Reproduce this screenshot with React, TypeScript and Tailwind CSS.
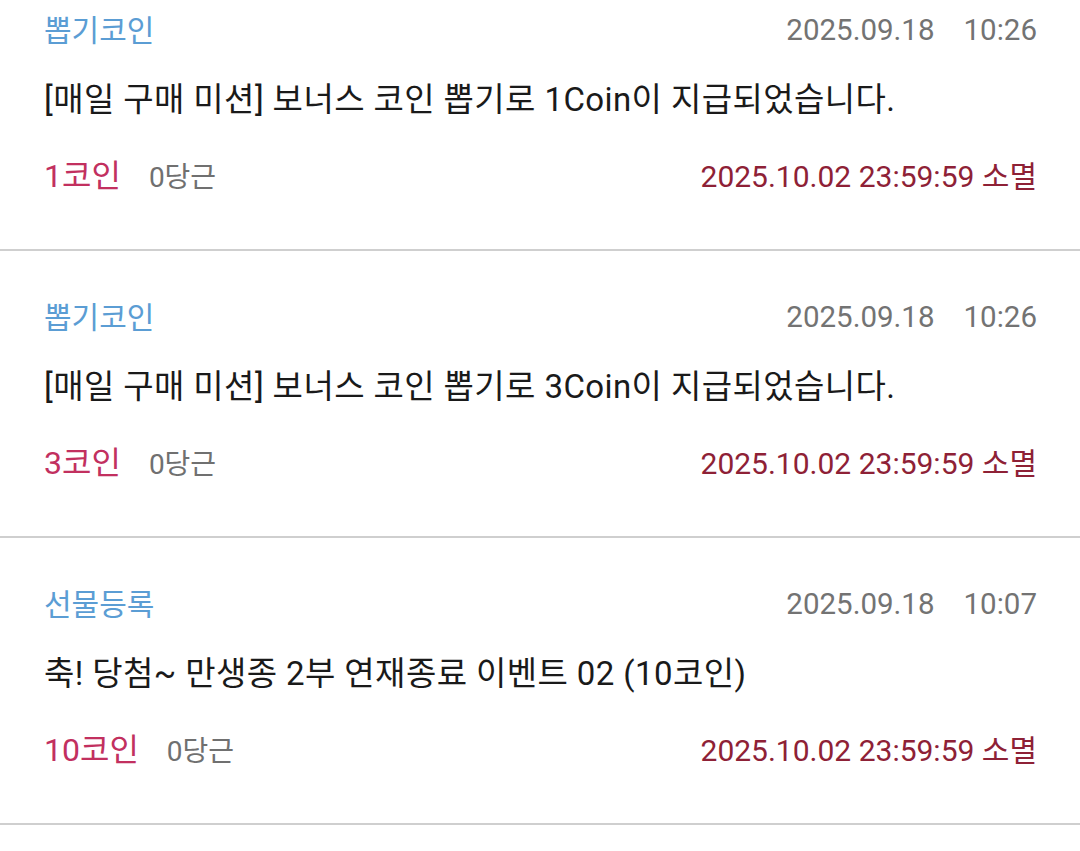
import React from 'react';

type Entry = {
  kind: string;
  date: string;
  time: string;
  message: string;
  coins: string;
  carrots: string;
  expires: string;
};

const entries: Entry[] = [
  {
    kind: '뽑기코인',
    date: '2025.09.18',
    time: '10:26',
    message: '[매일 구매 미션] 보너스 코인 뽑기로 1Coin이 지급되었습니다.',
    coins: '1코인',
    carrots: '0당근',
    expires: '2025.10.02 23:59:59 소멸',
  },
  {
    kind: '뽑기코인',
    date: '2025.09.18',
    time: '10:26',
    message: '[매일 구매 미션] 보너스 코인 뽑기로 3Coin이 지급되었습니다.',
    coins: '3코인',
    carrots: '0당근',
    expires: '2025.10.02 23:59:59 소멸',
  },
  {
    kind: '선물등록',
    date: '2025.09.18',
    time: '10:07',
    message: '축! 당첨~ 만생종 2부 연재종료 이벤트 02 (10코인)',
    coins: '10코인',
    carrots: '0당근',
    expires: '2025.10.02 23:59:59 소멸',
  },
];

const HistoryRow = ({ entry }: { entry: Entry }) => (
  <div className="border-b-2 border-[#cfcfcf] pl-[44px] pr-[43px] pt-[40px] pb-[47px]">
    <div className="flex h-[52px] items-center justify-between">
      <span className="text-[30px] text-[#5b9dd4]">{entry.kind}</span>
      <span className="flex gap-[29px] text-[29.5px] text-[#737373]">
        <span>{entry.date}</span>
        <span>{entry.time}</span>
      </span>
    </div>
    <div className="mt-[18px] flex h-[52px] items-center text-[33px] tracking-[0.4px] text-[#1a1a1a]">
      {entry.message}
    </div>
    <div className="mt-[24px] flex h-[52px] items-center justify-between">
      <div className="flex items-baseline gap-[28px]">
        <span className="text-[32px] text-[#c2305f]">{entry.coins}</span>
        <span className="text-[28px] text-[#707070]">{entry.carrots}</span>
      </div>
      <span className="text-[30px] text-[#8e2136]">{entry.expires}</span>
    </div>
  </div>
);

export default function App() {
  return (
    <div
      className="h-[851px] w-[1080px] overflow-hidden bg-white"
      style={{ fontFamily: '"Roboto", "Noto Sans CJK KR", sans-serif' }}
    >
      <div className="-mt-[36px]">
        {entries.map((entry, i) => (
          <HistoryRow key={i} entry={entry} />
        ))}
      </div>
    </div>
  );
}
